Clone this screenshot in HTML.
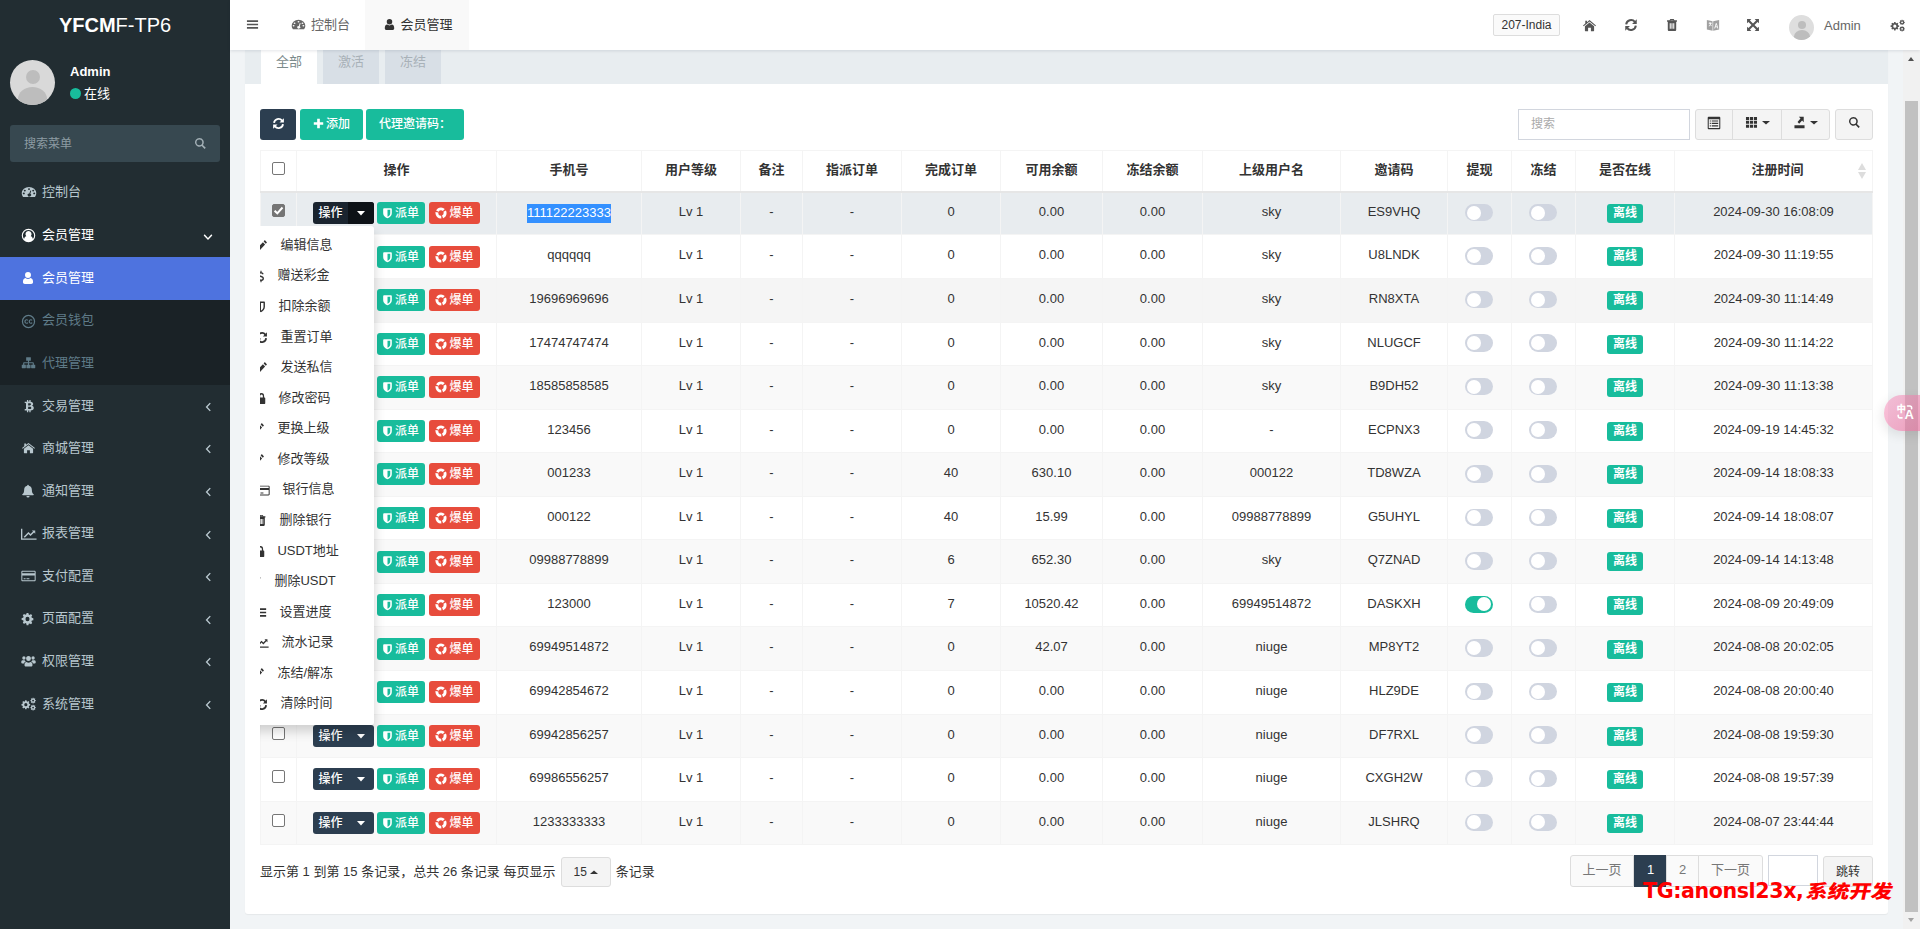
<!DOCTYPE html>
<html lang="zh-CN"><head><meta charset="utf-8"><title>YFCMF-TP6</title>
<style>
*{box-sizing:border-box;margin:0;padding:0}
html,body{width:1920px;height:929px;overflow:hidden}
body{font-family:"Liberation Sans","Noto Sans CJK SC",sans-serif;font-size:13px;line-height:18.5714px;color:#333;background:#f1f4f6;position:relative}
ul{list-style:none}
svg.ic{display:inline-block;vertical-align:middle}
/* sidebar */
.sidebar{position:absolute;left:0;top:0;width:230px;height:929px;background:#222d32;color:#b8c7ce}
.logo{height:50px;line-height:50px;text-align:center;color:#fff;font-size:20px;font-weight:400;letter-spacing:0}
.logo b{font-weight:700}
.user-panel{position:absolute;left:0;top:50px;width:230px;height:65px}
.avatar{position:absolute;left:10px;top:10px;width:45px;height:45px;border-radius:50%;background:#d9d9d9;overflow:hidden}
.avatar .hd{position:absolute;left:15.5px;top:10px;width:14px;height:14px;border-radius:50%;background:#bdbdbd}
.avatar .bd{position:absolute;left:8px;top:27px;width:29px;height:24px;border-radius:50%;background:#bdbdbd}
.user-panel .info{position:absolute;left:70px;top:11.7px;color:#fff}
.user-panel .info p{font-weight:700;font-size:13px;line-height:20px}
.user-panel .st{display:block;font-size:13px;line-height:20px;margin-top:2px}
.user-panel .dot{display:inline-block;width:11px;height:11px;border-radius:50%;background:#18bc9c;margin-right:3px;vertical-align:-1px}
.sb-search{position:absolute;left:10px;top:125px;width:210px;height:36.5px;background:#374850;border-radius:3px;color:#8d9ca3}
.sb-search .ph{position:absolute;left:14px;top:10px;font-size:12px}
.sb-search .sico{position:absolute;left:184px;top:12px;color:#a3b0b6}
.menu{position:absolute;left:0;top:171px;width:230px}
.menu>li{position:relative;height:42.57px;padding:12px 5px 12px 15px;font-size:13px;white-space:nowrap}
.menu li .mi{position:absolute;left:21px;top:50%;margin-top:-7px}
.menu li>span{position:absolute;left:42px;top:12px}
.menu li .arr{position:absolute;right:18.5px;top:50%;margin-top:-5px}
.menu>li.open{color:#fff}
.menu>li.open .arr{right:16px;margin-top:-1.5px}
.sub{background:#1a2226;margin-top:.8px}
.sub li{position:relative;height:42.57px;color:#5f7b88}
.sub li.active{background:#4e73df;color:#fff;box-shadow:0 1px 0 #4e73df}
/* topnav */
.topnav{position:absolute;left:230px;top:0;width:1690px;height:50px;background:#fff;box-shadow:0 1px 3px rgba(0,21,41,.11);z-index:20}
.topnav .toggle{position:absolute;left:16px;top:15px;color:#555}
.ntab{position:absolute;top:0;height:50px;line-height:49px;font-size:13px;color:#666}
.ntab svg{margin-right:5px;margin-top:-3px}
.ntab.t1{left:61px}
.ntab.t2{left:135px;width:104px;padding-left:17.5px;background:#f9f9f9;color:#333}
.site{position:absolute;left:1263px;top:14px;width:67px;height:22px;border:1px solid #ddd;border-radius:2px;background:#fafafa;font-size:12px;line-height:20px;text-align:center;color:#333}
.ti{position:absolute;top:16.6px;color:#555;line-height:16px}
.uav{position:absolute;left:1559px;top:15px;width:25px;height:25px;border-radius:50%;background:#dedede;overflow:hidden}
.uav .hd{position:absolute;left:8.5px;top:5.5px;width:8px;height:8px;border-radius:50%;background:#bdbdbd}
.uav .bd{position:absolute;left:4.5px;top:15px;width:16px;height:13px;border-radius:50%;background:#bdbdbd}
.uname{position:absolute;left:1594px;top:17px;font-size:13px;color:#666}
/* content */
.content{position:absolute;left:230px;top:50px;width:1673px;height:879px;background:#f1f4f6;overflow:hidden}
.panel{position:absolute;left:15px;top:0;width:1643px;height:864px;background:#fff;border-radius:0 0 3px 3px;box-shadow:0 1px 1px rgba(0,0,0,.05)}
.phead{position:absolute;left:0;top:0;width:1643px;height:34px;background:#e8edf0}
.pt{position:absolute;top:0;width:56px;height:34px;line-height:24px;text-align:center;background:#d8dfe6;color:#a8b1b8;font-size:13px}
.pt.a{background:#fff;color:#7b8a8b}
.toolbar{position:absolute;left:0;top:59px;width:1643px;height:31px}
.btn{position:absolute;top:0;height:31px;border-radius:3px;color:#fff;text-align:center;line-height:30px;font-size:12px}
.btn b{font-weight:500}
.btn.navy{background:#2c3e50}
.btn.teal{background:#18bc9c}
.btn svg{margin-top:-2px;margin-right:2px}
.btn.navy svg{margin-right:0}
.sinput{position:absolute;left:1273px;top:0;width:172px;height:31px;border:1px solid #d2d6de;background:#fff;font-size:12px;color:#aaa;line-height:29px;padding-left:12px}
.bgrp{position:absolute;left:1450px;top:0;width:135px;height:31px;border:1px solid #ddd;border-radius:3px;background:#f4f4f4;color:#333}
.bgrp>span{position:absolute;top:0;height:29px;line-height:24px;text-align:center}
.bgrp .g1{left:0;width:37px;border-right:1px solid #ddd}
.bgrp .g2{left:37px;width:49px;border-right:1px solid #ddd}
.bgrp .g3{left:86px;width:47px}
.bgrp .cd{margin-left:4px}
.sbtn{position:absolute;left:1590px;top:0;width:38px;height:31px;border:1px solid #ddd;border-radius:3px;background:#f4f4f4;text-align:center;line-height:24px;color:#333}
/* table */
.twrap{position:absolute;left:15px;top:100px;width:1614px;height:700px;overflow:hidden}
.tb{border-collapse:collapse;table-layout:fixed;width:1612px;border:1px solid #f4f4f4}
.tb th,.tb td{border:1px solid #f4f4f4;text-align:center;vertical-align:middle;white-space:nowrap;overflow:hidden}
.tb th.sortable{padding-left:8px}
.tb th{padding-bottom:2px;height:41.83px;font-weight:700;font-size:13px;color:#333;border-bottom:2px solid #e6e6e6;position:relative}
.tb td{height:43.5714px;padding:0 0 2px;font-size:13px}
.tb tr.odd td{background:#f9f9f9}
.tb tr.sel td{background:#e8ecef;height:42.5714px;padding-bottom:3px}
.tb tr.hov td{background:#f5f5f5}
.cb{display:inline-block;width:13px;height:13px;border:1px solid #767676;border-radius:2px;background:#fff;vertical-align:middle;position:relative;top:-2px}
.tb th .cb{top:-2px}
.cb.chk{background:#757575;border-color:#757575}
.cb svg{position:absolute;left:-1px;top:-1px}
.ops{font-size:0}
.bg{top:1px;display:inline-block;width:61px;height:22px;border-radius:3px;background:#2c3e50;color:#fff;font-size:12px;line-height:22px;vertical-align:middle;position:relative;text-align:left;margin-right:3px;font-weight:500}
.bg .b1{position:absolute;left:0;top:0;width:35px;height:22px;line-height:23px;text-align:center;padding-left:0}
.bg .b2{position:absolute;left:35px;top:0;width:26px;padding-right:1px;height:22px;text-align:center;border-radius:0 3px 3px 0}
.bg .b2 svg{margin-top:-1px}
.bg.open{background:#1a242f}
.bg.open .b2{background:#0d1217}
.bx{position:relative;top:1px;display:inline-block;height:22px;border-radius:3px;color:#fff;font-size:12px;line-height:22px;font-weight:500;vertical-align:middle;text-align:center}
.bx svg{margin-top:-2px;margin-right:0}
.bx .shd{width:11px;margin-left:-1px;margin-right:2px}
.bx .rcy{margin-left:-1px;margin-right:1px}
.bx.gr{width:48px;background:#18bc9c;margin-right:4px}
.bx.rd{width:51px;background:#e74c3c}
.hl{background:#3390ff;color:#fff;display:inline-block;line-height:19px;position:relative;top:1px}
.hl span{position:relative;top:-1px}
.sw{left:-1px;top:0;display:inline-block;width:28px;height:17.5px;border-radius:9px;background:#d0d5e0;position:relative;vertical-align:middle}
.sw i{position:absolute;left:2px;top:1.75px;width:14px;height:14px;border-radius:50%;background:#fff}
.sw.on{background:#18bc9c}
.sw.on i{left:12px}
.lb{position:relative;top:1.25px;display:inline-block;width:36px;height:19px;border-radius:3px;background:#18bc9c;color:#fff;font-weight:700;font-size:12px;line-height:19px;vertical-align:middle}
.sort{position:absolute;right:5px;top:12px;width:9px;height:16px}
.sort i{position:absolute;left:0;width:0;height:0;border-left:4px solid transparent;border-right:4px solid transparent}
.sort .u{top:0;border-bottom:7px solid #ddd}
.sort .d{top:9px;border-top:7px solid #ddd}
/* dropdown */
.ddclip{position:absolute;left:0;top:76px;width:130px;height:520px;overflow:hidden;pointer-events:none}
.dd{position:absolute;left:-46px;top:0;width:160px;height:499px;background:#fff;border-radius:3px;box-shadow:0 6px 12px rgba(0,0,0,.175)}
.dd li{position:absolute;left:46px;height:30px;width:114px;line-height:26px;color:#333;font-size:13px}
.dd .di{position:absolute;top:0;color:#333}
.dd .dtx{position:absolute;top:0;white-space:nowrap}
/* footer */
.pfoot{position:absolute;left:15px;top:805px;width:1613px;height:34px}
.pinfo{position:absolute;left:0;top:.5px;line-height:32px;font-size:13px;color:#333;white-space:nowrap}
.psz{display:inline-block;width:50.5px;margin-left:1.5px !important;height:30px;border:1px solid #ddd;border-radius:3px;background:#f4f4f4;line-height:28px;text-align:center;font-size:12px;vertical-align:middle;margin:0 1px 0 0}
.psz .cu{margin-left:3px;margin-top:-1px}
.pg{position:absolute;left:1310px;top:.3px;height:32px;font-size:13px;color:#777}
.pg li{position:absolute;top:0;height:32px;line-height:28.6px;text-align:center;border:1px solid #ddd;background:#fafafa;color:#777}
.pg .p1{left:0;width:64px;border-radius:3px 0 0 3px}
.pg .p2{left:64px;width:33px}
.pg .p2.on{background:#2c3e50;border-color:#2c3e50;color:#fff}
.pg .p3{left:96px;width:33px}
.pg .p4{left:128px;width:65px;border-radius:0 3px 3px 0}
.jin{position:absolute;left:1508px;top:0;width:50px;height:31px;border:1px solid #d2d6de;background:#fff}
.jbtn{position:absolute;left:1563px;top:1px;width:50px;height:31px;border:1px solid #ddd;border-radius:3px;background:#f4f4f4;text-align:center;line-height:30.5px;font-size:12px;color:#333}
.wm{position:absolute;left:0;top:0;color:#fe0000;white-space:nowrap;font-weight:700}
.wm .l{position:absolute;left:1398px;top:828.6px;font-family:"DejaVu Sans","Liberation Sans",sans-serif;font-size:20.6px;line-height:24px;font-weight:700;letter-spacing:-.4px}
.wm .c{position:absolute;left:1558.5px;top:830px;font-size:18.4px;line-height:24px;font-weight:900;transform:scaleX(1.175) skewX(-10deg);transform-origin:0 100%}
/* scroll + translate */
.scroll{position:absolute;left:1903px;top:50px;width:17px;height:879px;background:#f1f1f1}
.scroll .thumb{position:absolute;left:2px;top:51px;width:13px;height:811px;background:#c1c1c1}
.scroll .au{position:absolute;left:4.9px;top:7px;border-left:3.7px solid transparent;border-right:3.7px solid transparent;border-bottom:4px solid #505050}
.scroll .ad{position:absolute;left:4.9px;bottom:7px;border-left:3.7px solid transparent;border-right:3.7px solid transparent;border-top:4px solid #a3a3a3}
.trans{position:absolute;left:1884px;top:395px;width:46px;height:36px;border-radius:18px 0 0 18px;background:linear-gradient(135deg,rgba(243,140,185,.5),rgba(232,100,150,.62));box-shadow:-2px 4px 12px rgba(0,0,0,.09);z-index:30;color:#fff}
.trans .zh{position:absolute;left:12.5px;top:7.5px;font-size:9.5px;line-height:12px;font-weight:900}
.trans .en{position:absolute;left:20.5px;top:13px;font-size:13px;line-height:14px;font-weight:700}
.trans svg{position:absolute;left:12px;top:8px}

</style></head>
<body>
<aside class="sidebar">
<div class="logo"><b>YFCM</b>F-TP6</div>
<div class="user-panel"><div class="avatar"><span class="hd"></span><span class="bd"></span></div><div class="info"><p>Admin</p><span class="st"><i class="dot"></i>在线</span></div></div>
<div class="sb-search"><span class="ph">搜索菜单</span><svg class="ic sico" width="13" height="13" viewBox="0 0 16 16" preserveAspectRatio="none" fill="currentColor" style=""><path fill-rule="evenodd" d="M6.600 1.200a5.400 5.400 0 0 1 4.400 8.500l3.500 3.500-1.500 1.500-3.500-3.500A5.400 5.400 0 1 1 6.600 1.200zm0 1.800a3.600 3.600 0 1 0 0 7.200 3.600 3.600 0 0 0 0-7.200z"/></svg></div>
<ul class="menu">
<li><svg class="ic mi" width="16" height="14" viewBox="0 0 16 16" preserveAspectRatio="none" fill="currentColor" style=""><path d="M8 2.2A7.3 7.3 0 0 0 .7 9.5c0 1.5.4 2.8 1.2 4 .1.2.3.3.5.3h11.2c.2 0 .4-.1.5-.3.8-1.200 1.200-2.500 1.200-4A7.300 7.300 0 0 0 8 2.2zM8 3.600a1 1 0 1 1 0 2 1 1 0 0 1 0-2zM3.800 5.400a1 1 0 1 1 0 2 1 1 0 0 1 0-2zM2.800 8.600a1 1 0 1 1 0 2 1 1 0 0 1 0-2zm10.400 0a1 1 0 1 1 0 2 1 1 0 0 1 0-2zM12.200 5.400a1 1 0 1 1 0 2 1 1 0 0 1 0-2zM9.400 6.300l.9.300-1 3.400a1.700 1.700 0 1 1-1-.300z"/></svg><span>控制台</span></li>
<li class="open"><svg class="ic mi" width="15" height="15" viewBox="0 0 16 16" preserveAspectRatio="none" fill="currentColor" style=""><path fill-rule="evenodd" d="M8 .8a7.200 7.200 0 1 0 0 14.400A7.200 7.200 0 0 0 8 .8zm0 1.300a5.900 5.900 0 0 1 4.700 9.500c-.3-1.500-1-2.600-2.300-2.900A3.300 3.300 0 0 0 8 3.200a3.300 3.300 0 0 0-2.400 5.500c-1.300.3-2 1.400-2.300 2.900A5.900 5.900 0 0 1 8 2.100z"/></svg><span>会员管理</span><svg class="ic arr" width="12" height="8" viewBox="0 0 14 8" preserveAspectRatio="none" fill="currentColor" style=""><path d="M2.500 1.800L7 6l4.500-4.200" fill="none" stroke="currentColor" stroke-width="1.600"/></svg></li>
<ul class="sub">
<li class="active"><svg class="ic mi" width="14" height="14" viewBox="0 0 16 16" preserveAspectRatio="none" fill="currentColor" style=""><path d="M8 1.200a3.400 3.400 0 1 1 0 6.800 3.400 3.400 0 0 1 0-6.800zM5.200 8.100c.8.600 1.700 1 2.800 1s2-.400 2.800-1c2 .200 3 2 3 4.400 0 1.400-.9 2.300-2.200 2.300H4.400c-1.300 0-2.200-.9-2.200-2.300 0-2.400 1-4.200 3-4.400z"/></svg><span>会员管理</span></li>
<li><svg class="ic mi" width="15" height="15" viewBox="0 0 16 16" preserveAspectRatio="none" fill="currentColor" style=""><path fill-rule="evenodd" d="M8 .9a7.100 7.100 0 1 0 0 14.200A7.100 7.100 0 0 0 8 .9zm0 1.300a5.800 5.800 0 1 1 0 11.600A5.800 5.800 0 0 1 8 2.200zM5.900 5.600c-1.400 0-2.300 1-2.300 2.400s.9 2.400 2.300 2.400c.8 0 1.400-.3 1.800-.9l-.8-.6c-.2.300-.5.500-.9.500-.7 0-1.100-.6-1.100-1.400s.4-1.400 1.100-1.400c.4 0 .7.200.9.500l.8-.6c-.4-.6-1-.9-1.800-.9zm4.600 0c-1.400 0-2.300 1-2.300 2.400s.9 2.400 2.300 2.400c.8 0 1.400-.3 1.800-.9l-.8-.6c-.2.300-.5.500-.9.500-.7 0-1.100-.6-1.100-1.400s.4-1.400 1.100-1.400c.4 0 .7.200.9.500l.8-.6c-.4-.6-1-.9-1.800-.9z"/></svg><span>会员钱包</span></li>
<li><svg class="ic mi" width="15" height="14" viewBox="0 0 16 16" preserveAspectRatio="none" fill="currentColor" style=""><path d="M6 1.500h4c.3 0 .5.200.5.500v3c0 .3-.2.500-.5.500H8.600v1.700h4.200c.5 0 .9.400.9.900v1.900h1c.3 0 .5.200.5.500v3c0 .3-.2.500-.5.500h-3.400c-.3 0-.5-.2-.5-.5v-3c0-.3.200-.5.500-.5h1.200V8.400H8.600V10h1.100c.3 0 .5.200.5.500v3c0 .3-.2.500-.5.500H6.300c-.3 0-.5-.2-.5-.5v-3c0-.3.200-.5.500-.5h1.100V8.400H3.500V10h1.200c.3 0 .5.200.5.500v3c0 .3-.2.500-.5.500H1.300c-.3 0-.5-.2-.5-.5v-3c0-.3.200-.5.500-.5h1V8.100c0-.5.400-.9.900-.9h4.200V5.500H6c-.3 0-.5-.2-.5-.5V2c0-.3.200-.5.500-.5z"/></svg><span>代理管理</span></li>
</ul>
<li><svg class="ic mi" width="12" height="14" viewBox="0 0 14 16" preserveAspectRatio="none" fill="currentColor" style="margin-left:1.5px"><path fill-rule="evenodd" d="M4.600 1h1.500v1.900h1.300V1h1.500v2c1.900.2 3 1.100 3 2.600 0 1-.5 1.700-1.400 2.100 1.300.3 2.100 1.200 2.100 2.500 0 1.800-1.300 2.800-3.700 2.900V15H7.400v-1.900H6.100V15H4.600v-1.900H2v-1.600h.9c.4 0 .6-.2.600-.6V5.200c0-.4-.2-.6-.6-.6H2V3h2.600zm1.400 3.800v2.500h1.700c1 0 1.600-.5 1.600-1.300s-.6-1.200-1.600-1.200zm0 4.100v2.600h2c1.100 0 1.700-.5 1.700-1.300s-.6-1.300-1.700-1.300z"/></svg><span>交易管理</span><svg class="ic arr" width="7" height="12" viewBox="0 0 8 14" preserveAspectRatio="none" fill="currentColor" style=""><path d="M6 2.500L1.800 7 6 11.500" fill="none" stroke="currentColor" stroke-width="1.600"/></svg></li>
<li><svg class="ic mi" width="15" height="14" viewBox="0 0 16 16" preserveAspectRatio="none" fill="currentColor" style=""><path d="M8 2.200l6.900 5.700-.7.900L8 3.700 1.800 8.800l-.7-.9 2.400-2V2.800h1.800v1.600zM8 4.900l4.900 4v4.600c0 .3-.2.500-.5.500H9.500v-3.500h-3V14H3.600c-.3 0-.5-.2-.5-.5V8.900z"/></svg><span>商城管理</span><svg class="ic arr" width="7" height="12" viewBox="0 0 8 14" preserveAspectRatio="none" fill="currentColor" style=""><path d="M6 2.500L1.800 7 6 11.500" fill="none" stroke="currentColor" stroke-width="1.600"/></svg></li>
<li><svg class="ic mi" width="14" height="14" viewBox="0 0 16 16" preserveAspectRatio="none" fill="currentColor" style=""><path d="M8 .8c.5 0 .9.400.9.900v.3c2.100.4 3.500 2.200 3.500 4.500 0 3.300 1 4.400 2.300 5.500 0 .5-.4.900-.9.900H2.200c-.5 0-.9-.4-.9-.9 1.300-1.100 2.300-2.200 2.300-5.500 0-2.300 1.400-4.100 3.500-4.500v-.3c0-.5.400-.9.900-.9zM6.200 13.700h3.600a1.800 1.800 0 0 1-3.600 0z"/></svg><span>通知管理</span><svg class="ic arr" width="7" height="12" viewBox="0 0 8 14" preserveAspectRatio="none" fill="currentColor" style=""><path d="M6 2.500L1.800 7 6 11.500" fill="none" stroke="currentColor" stroke-width="1.600"/></svg></li>
<li><svg class="ic mi" width="16" height="14" viewBox="0 0 18 16" preserveAspectRatio="none" fill="currentColor" style=""><path d="M1.500 2v11h16v1.500H0V2zM16 3.500v4.200L14.700 6.400l-4 4-2.300-2.300L4.300 12.200 3.100 11l5.300-5.300 2.300 2.300 2.800-2.800L12.200 3.900H16z"/></svg><span>报表管理</span><svg class="ic arr" width="7" height="12" viewBox="0 0 8 14" preserveAspectRatio="none" fill="currentColor" style=""><path d="M6 2.500L1.800 7 6 11.500" fill="none" stroke="currentColor" stroke-width="1.600"/></svg></li>
<li><svg class="ic mi" width="15" height="14" viewBox="0 0 18 16" preserveAspectRatio="none" fill="currentColor" style=""><path fill-rule="evenodd" d="M1.800 2h14.400c.8 0 1.400.6 1.400 1.400v9.200c0 .8-.6 1.400-1.400 1.400H1.800c-.8 0-1.400-.6-1.400-1.400V3.400C.4 2.600 1 2 1.800 2zm0 1.200a.2.200 0 0 0-.2.200v1.500h14.800V3.400a.2.200 0 0 0-.2-.2zM1.600 7.500v5.100c0 .1.100.2.200.2h14.400c.1 0 .2-.1.200-.2V7.500zm1.600 3.100h2.300v1.200H3.200zm3.400 0h3.500v1.200H6.600z"/></svg><span>支付配置</span><svg class="ic arr" width="7" height="12" viewBox="0 0 8 14" preserveAspectRatio="none" fill="currentColor" style=""><path d="M6 2.500L1.800 7 6 11.500" fill="none" stroke="currentColor" stroke-width="1.600"/></svg></li>
<li><svg class="ic mi" width="13" height="14" viewBox="0 0 16 16" preserveAspectRatio="none" fill="currentColor" style=""><path fill-rule="evenodd" d="M6.900 1h2.200l.4 1.900c.4.100.8.300 1.200.5l1.600-1 1.500 1.500-1 1.600c.2.400.4.800.5 1.200l1.900.4v2.200l-1.900.4c-.1.400-.3.800-.5 1.200l1 1.600-1.500 1.500-1.600-1c-.4.200-.8.400-1.200.5L9.100 15H6.900l-.4-1.900c-.4-.1-.8-.3-1.200-.5l-1.600 1-1.500-1.500 1-1.600c-.2-.4-.4-.8-.5-1.200L.8 9.100V6.900l1.900-.4c.1-.4.300-.8.5-1.200l-1-1.600 1.500-1.500 1.600 1c.4-.2.800-.4 1.200-.5zM8 5.500a2.500 2.500 0 1 0 0 5 2.500 2.500 0 0 0 0-5z"/></svg><span>页面配置</span><svg class="ic arr" width="7" height="12" viewBox="0 0 8 14" preserveAspectRatio="none" fill="currentColor" style=""><path d="M6 2.500L1.800 7 6 11.500" fill="none" stroke="currentColor" stroke-width="1.600"/></svg></li>
<li><svg class="ic mi" width="15" height="14" viewBox="0 0 18 16" preserveAspectRatio="none" fill="currentColor" style=""><path d="M9 2.300a2.900 2.900 0 1 1 0 5.800 2.900 2.900 0 0 1 0-5.800zM3.500 2.600a2 2 0 1 1 0 4 2 2 0 0 1 0-4zm11 0a2 2 0 1 1 0 4 2 2 0 0 1 0-4zM1.800 7h2.600c.3.700.9 1.300 1.600 1.700-1.100.2-2 1-2.300 2.100H2c-1 0-1.700-.5-1.700-1.500C.3 8 .8 7 1.800 7zm14.400 0c1 0 1.500 1 1.500 2.300 0 1-.7 1.500-1.700 1.500h-1.700c-.3-1.100-1.200-1.900-2.300-2.100.7-.4 1.300-1 1.600-1.700zM6.700 9.200c.7.400 1.500.7 2.300.7s1.600-.3 2.300-.7c1.700.1 2.500 1.500 2.500 3.300 0 1.100-.7 1.800-1.800 1.800H6c-1.100 0-1.800-.7-1.800-1.800 0-1.800.8-3.200 2.500-3.300z"/></svg><span>权限管理</span><svg class="ic arr" width="7" height="12" viewBox="0 0 8 14" preserveAspectRatio="none" fill="currentColor" style=""><path d="M6 2.500L1.800 7 6 11.500" fill="none" stroke="currentColor" stroke-width="1.600"/></svg></li>
<li><svg class="ic mi" width="15" height="14" viewBox="0 0 18 16" preserveAspectRatio="none" fill="currentColor" style=""><path fill-rule="evenodd" d="M5 3.600h1.600l.3 1.300c.3.100.6.200.9.400l1.100-.7 1.100 1.100-.7 1.100c.2.300.3.600.4.900l1.300.3v1.600l-1.300.3c-.1.300-.2.600-.4.900l.7 1.100-1.100 1.100-1.100-.7c-.3.200-.6.300-.9.400l-.3 1.300H5l-.3-1.300c-.3-.1-.6-.2-.9-.4l-1.100.7-1.100-1.100.7-1.100c-.2-.3-.3-.6-.4-.9L.6 9.600V8l1.300-.3c.1-.3.200-.6.400-.9l-.7-1.100 1.100-1.100 1.100.7c.3-.2.600-.3.900-.4zm.8 3.300a1.900 1.900 0 1 0 0 3.800 1.900 1.900 0 0 0 0-3.800zM14 .8h1l.2.900.5.200.8-.5.700.7-.5.800.2.500.9.200v1l-.9.200-.2.500.5.800-.7.700-.8-.5-.5.200-.2.900h-1l-.2-.9-.5-.2-.8.500-.7-.7.500-.8-.2-.5-.9-.2v-1l.9-.2.2-.5-.5-.8.700-.7.800.5.500-.2zm.5 2.200a1.100 1.100 0 1 0 0 2.200 1.100 1.100 0 0 0 0-2.200zM14 8.800h1l.2.900.5.200.8-.5.700.7-.5.800.2.500.9.200v1l-.9.200-.2.500.5.800-.7.700-.8-.5-.5.200-.2.900h-1l-.2-.9-.5-.2-.8.500-.7-.7.500-.8-.2-.5-.9-.2v-1l.9-.2.2-.5-.5-.8.700-.7.800.5.500-.2zm.5 2.200a1.100 1.100 0 1 0 0 2.200 1.100 1.100 0 0 0 0-2.200z"/></svg><span>系统管理</span><svg class="ic arr" width="7" height="12" viewBox="0 0 8 14" preserveAspectRatio="none" fill="currentColor" style=""><path d="M6 2.500L1.800 7 6 11.500" fill="none" stroke="currentColor" stroke-width="1.600"/></svg></li>
</ul></aside>
<header class="topnav">
<a class="toggle"><svg class="ic " width="13" height="13" viewBox="0 0 14 14" preserveAspectRatio="none" fill="currentColor" style=""><path d="M1 2.500h12v1.800H1zm0 3.600h12v1.800H1zm0 3.600h12v1.800H1z"/></svg></a>
<div class="ntab t1"><svg class="ic " width="15" height="13" viewBox="0 0 16 16" preserveAspectRatio="none" fill="currentColor" style=""><path d="M8 2.2A7.3 7.3 0 0 0 .7 9.5c0 1.5.4 2.8 1.2 4 .1.2.3.3.5.3h11.2c.2 0 .4-.1.5-.3.8-1.200 1.200-2.500 1.200-4A7.300 7.300 0 0 0 8 2.2zM8 3.600a1 1 0 1 1 0 2 1 1 0 0 1 0-2zM3.800 5.400a1 1 0 1 1 0 2 1 1 0 0 1 0-2zM2.800 8.600a1 1 0 1 1 0 2 1 1 0 0 1 0-2zm10.400 0a1 1 0 1 1 0 2 1 1 0 0 1 0-2zM12.200 5.400a1 1 0 1 1 0 2 1 1 0 0 1 0-2zM9.400 6.300l.9.300-1 3.400a1.700 1.700 0 1 1-1-.300z"/></svg><span>控制台</span></div>
<div class="ntab t2 act"><svg class="ic " width="13" height="13" viewBox="0 0 16 16" preserveAspectRatio="none" fill="currentColor" style=""><path d="M8 1.200a3.400 3.400 0 1 1 0 6.800 3.400 3.400 0 0 1 0-6.800zM5.200 8.100c.8.600 1.700 1 2.800 1s2-.400 2.800-1c2 .200 3 2 3 4.400 0 1.400-.9 2.300-2.200 2.300H4.400c-1.300 0-2.200-.9-2.200-2.300 0-2.400 1-4.200 3-4.400z"/></svg><span>会员管理</span></div>
<div class="site">207-India</div>
<span class="ti" style="left:1352px"><svg class="ic " width="15" height="15" viewBox="0 0 16 16" preserveAspectRatio="none" fill="currentColor" style=""><path d="M8 2.200l6.900 5.700-.7.900L8 3.700 1.800 8.800l-.7-.9 2.400-2V2.800h1.800v1.600zM8 4.900l4.900 4v4.600c0 .3-.2.500-.5.500H9.500v-3.500h-3V14H3.600c-.3 0-.5-.2-.5-.5V8.900z"/></svg></span>
<span class="ti" style="left:1394px"><svg class="ic " width="14" height="14" viewBox="0 0 16 16" preserveAspectRatio="none" fill="currentColor" style=""><g fill="none" stroke="currentColor" stroke-width="2.300"><path d="M2.500 7.300A5.600 5.600 0 0 1 12.400 4.400"/><path d="M13.500 8.700A5.600 5.600 0 0 1 3.600 11.600"/></g><path d="M14.600 1.400v5.400H9.200z"/><path d="M1.400 14.600V9.200h5.400z"/></svg></span>
<span class="ti" style="left:1435px"><svg class="ic " width="14" height="14" viewBox="0 0 16 16" preserveAspectRatio="none" fill="currentColor" style=""><path fill-rule="evenodd" d="M6 1.200h4l.7 1.500h2.600c.2 0 .4.200.4.400v.8c0 .2-.2.400-.4.400h-.5v9c0 .8-.6 1.500-1.400 1.500H4.600c-.8 0-1.400-.7-1.400-1.500v-9h-.5c-.2 0-.4-.2-.4-.4v-.8c0-.2.200-.4.400-.4h2.600zm.5 1l-.3.500h3.600l-.3-.5zM5.400 6v6.200h1.200V6zm2 0v6.200h1.200V6zm2 0v6.200h1.200V6z"/></svg></span>
<span class="ti" style="left:1476px;opacity:.55"><svg class="ic " width="14" height="14" viewBox="0 0 16 16" preserveAspectRatio="none" fill="currentColor" style=""><path fill-rule="evenodd" d="M1 2.200l6.500 1.600v10.800L1 13zm7.200 1.500L15 2.300v10.900l-6.800 1.500zM3.200 5.500v1h1.500c-.2 1-.8 1.900-1.700 2.600l.5.600c.6-.5 1.100-1 1.400-1.700.3.500.7 1 1.200 1.300l.4-.7c-.5-.3-.9-.8-1.200-1.400.2-.5.300-.5.400-.7H6.500v-1H5v-.8H4.200v.8zm8 .5l-1.800 6h1l.4-1.400h1.900l.4 1.400h1l-1.800-6zm.5 1.200l.7 2.500h-1.400z"/></svg></span>
<span class="ti" style="left:1516px"><svg class="ic " width="14" height="14" viewBox="0 0 16 16" preserveAspectRatio="none" fill="currentColor" style=""><path d="M1.200 1.200h4.900L4.500 2.800 8 6.300l3.500-3.500-1.600-1.600h4.900v4.900l-1.600-1.600L9.700 8l3.500 3.500 1.600-1.600v4.900H9.900l1.600-1.600L8 9.700l-3.500 3.500 1.600 1.600H1.200V9.900l1.600 1.600L6.300 8 2.800 4.500 1.200 6.100z"/></svg></span>
<div class="uav"><span class="hd"></span><span class="bd"></span></div><span class="uname">Admin</span>
<span class="ti" style="left:1660px"><svg class="ic " width="15" height="13" viewBox="0 0 18 16" preserveAspectRatio="none" fill="currentColor" style=""><path fill-rule="evenodd" d="M5 3.600h1.600l.3 1.300c.3.100.6.200.9.400l1.100-.7 1.100 1.100-.7 1.100c.2.300.3.600.4.900l1.300.3v1.600l-1.300.3c-.1.300-.2.600-.4.900l.7 1.100-1.100 1.100-1.100-.7c-.3.200-.6.300-.9.400l-.3 1.300H5l-.3-1.300c-.3-.1-.6-.2-.9-.4l-1.100.7-1.100-1.100.7-1.100c-.2-.3-.3-.6-.4-.9L.6 9.600V8l1.300-.3c.1-.3.200-.6.400-.9l-.7-1.100 1.100-1.100 1.100.7c.3-.2.600-.3.900-.4zm.8 3.300a1.900 1.900 0 1 0 0 3.800 1.900 1.900 0 0 0 0-3.800zM14 .8h1l.2.900.5.200.8-.5.700.7-.5.800.2.500.9.200v1l-.9.200-.2.500.5.800-.7.700-.8-.5-.5.200-.2.900h-1l-.2-.9-.5-.2-.8.500-.7-.7.500-.8-.2-.5-.9-.2v-1l.9-.2.2-.5-.5-.8.700-.7.800.5.500-.2zm.5 2.200a1.100 1.100 0 1 0 0 2.200 1.100 1.100 0 0 0 0-2.200zM14 8.800h1l.2.900.5.200.8-.5.700.7-.5.800.2.500.9.200v1l-.9.200-.2.500.5.800-.7.700-.8-.5-.5.200-.2.900h-1l-.2-.9-.5-.2-.8.500-.7-.7.500-.8-.2-.5-.9-.2v-1l.9-.2.2-.5-.5-.8.700-.7.800.5.500-.2zm.5 2.200a1.100 1.100 0 1 0 0 2.200 1.100 1.100 0 0 0 0-2.200z"/></svg></span>
</header>
<div class="content">
<div class="panel">
<div class="phead"><span class="pt a" style="left:16px">全部</span><span class="pt" style="left:78px">激活</span><span class="pt" style="left:140px">冻结</span></div>
<div class="toolbar">
<span class="btn navy" style="left:15px;width:36px"><svg class="ic " width="13" height="13" viewBox="0 0 16 16" preserveAspectRatio="none" fill="currentColor" style=""><g fill="none" stroke="currentColor" stroke-width="2.300"><path d="M2.500 7.300A5.600 5.600 0 0 1 12.400 4.400"/><path d="M13.500 8.700A5.600 5.600 0 0 1 3.600 11.600"/></g><path d="M14.600 1.400v5.400H9.200z"/><path d="M1.400 14.600V9.200h5.400z"/></svg></span>
<span class="btn teal" style="left:55px;width:63px"><svg class="ic " width="11" height="11" viewBox="0 0 14 14" preserveAspectRatio="none" fill="currentColor" style=""><path d="M5.300 1h3.400v4.300H13v3.400H8.700V13H5.300V8.700H1V5.300h4.300z"/></svg><b>添加</b></span>
<span class="btn teal" style="left:121px;width:98px"><b>代理邀请码：</b></span>
<span class="sinput"><span>搜索</span></span>
<span class="bgrp"><span class="g1"><svg class="ic " width="14" height="16" viewBox="0 0 16 16" preserveAspectRatio="none" fill="currentColor" style=""><path fill-rule="evenodd" d="M1.800 1.800h12.400c.6 0 1 .4 1 1v10.400c0 .6-.4 1-1 1H1.800c-.6 0-1-.4-1-1V2.800c0-.6.400-1 1-1zm.2 2.400v8.800h12V4.200zM3.200 5.400h1.200v1.200H3.200zm2.200 0h7.400v1.200H5.400zM3.200 7.800h1.200V9H3.200zm2.200 0h7.400V9H5.400zm-2.200 2.400h1.200v1.200H3.200zm2.200 0h7.400v1.200H5.400z"/></svg></span><span class="g2"><svg class="ic " width="13" height="15" viewBox="0 0 16 16" preserveAspectRatio="none" fill="currentColor" style=""><path d="M1.200 2h3.900v3.200H1.200zm4.900 0H10v3.200H6.100zM11 2h3.800v3.200H11zM1.200 6.200h3.900v3.200H1.200zm4.900 0H10v3.200H6.100zm4.900 0h3.800v3.200H11zM1.200 10.400h3.900v3.200H1.200zm4.900 0H10v3.200H6.100zm4.900 0h3.800v3.200H11z"/></svg><svg class="ic cd" width="8" height="4" viewBox="0 0 8 5" preserveAspectRatio="none" fill="currentColor" style=""><path d="M0 0h8L4 4.500z"/></svg></span><span class="g3"><svg class="ic " width="13" height="15" viewBox="0 0 16 16" preserveAspectRatio="none" fill="currentColor" style=""><path d="M1.800 11h12.400v3.200H1.800zM7.200 1.800h6v6l-2-2-3.600 3.600-2-2L9.200 3.800z"/></svg><svg class="ic cd" width="8" height="4" viewBox="0 0 8 5" preserveAspectRatio="none" fill="currentColor" style=""><path d="M0 0h8L4 4.500z"/></svg></span></span>
<span class="sbtn"><svg class="ic " width="13" height="13" viewBox="0 0 16 16" preserveAspectRatio="none" fill="currentColor" style=""><path fill-rule="evenodd" d="M6.600 1.200a5.400 5.400 0 0 1 4.400 8.500l3.500 3.500-1.500 1.500-3.500-3.500A5.400 5.400 0 1 1 6.600 1.200zm0 1.800a3.600 3.600 0 1 0 0 7.200 3.600 3.600 0 0 0 0-7.200z"/></svg></span>
</div>
<div class="twrap">
<table class="tb"><colgroup>
<col style="width:36px">
<col style="width:200px">
<col style="width:145px">
<col style="width:99px">
<col style="width:62px">
<col style="width:99px">
<col style="width:99px">
<col style="width:102px">
<col style="width:100px">
<col style="width:138px">
<col style="width:107px">
<col style="width:64px">
<col style="width:64px">
<col style="width:99px">
<col style="width:198px">
</colgroup><thead><tr><th><span class="cb"></span></th>
<th>操作</th>
<th>手机号</th>
<th>用户等级</th>
<th>备注</th>
<th>指派订单</th>
<th>完成订单</th>
<th>可用余额</th>
<th>冻结余额</th>
<th>上级用户名</th>
<th>邀请码</th>
<th>提现</th>
<th>冻结</th>
<th>是否在线</th>
<th class="sortable">注册时间<span class="sort"><i class="u"></i><i class="d"></i></span></th>
</tr></thead><tbody>
<tr class="sel">
<td><span class="cb chk"><svg width="13" height="13" viewBox="0 0 13 13"><path d="M2.600 6.700l2.700 2.600 5.200-5.800" fill="none" stroke="#fff" stroke-width="2"/></svg></span></td>
<td class="ops"><span class="bg open"><span class="b1">操作</span><span class="b2"><svg class="ic " width="8" height="5" viewBox="0 0 8 5" preserveAspectRatio="none" fill="currentColor" style=""><path d="M0 0h8L4 4.500z"/></svg></span></span><span class="bx gr"><svg class="ic shd" width="12" height="12" viewBox="0 0 14 14" preserveAspectRatio="none" fill="currentColor" style=""><path fill-rule="evenodd" d="M2.500 1.500h9c.6 0 1 .4 1 1v4.700c0 2.800-2.400 4.700-5.500 6C3.900 11.900 1.500 10 1.500 7.200V2.500c0-.6.400-1 1-1zM7 3.200v8.200c1.900-.9 3.500-2.200 3.500-4.200V3.200z"/></svg>派单</span><span class="bx rd"><svg class="ic rcy" width="14" height="14" viewBox="0 0 16 16" preserveAspectRatio="none" fill="currentColor" style=""><circle cx="8" cy="8" r="4.700" fill="none" stroke="currentColor" stroke-width="3.300" stroke-dasharray="8.350 1.500" stroke-dashoffset="3"/></svg>爆单</span></td>
<td><span class="hl"><span>111122223333</span></span></td>
<td>Lv 1</td>
<td>-</td>
<td>-</td>
<td>0</td>
<td>0.00</td>
<td>0.00</td>
<td>sky</td>
<td>ES9VHQ</td>
<td><span class="sw "><i></i></span></td>
<td><span class="sw "><i></i></span></td>
<td><span class="lb">离线</span></td>
<td class="dt">2024-09-30 16:08:09</td>
</tr>
<tr class="">
<td><span class="cb "></span></td>
<td class="ops"><span class="bg "><span class="b1">操作</span><span class="b2"><svg class="ic " width="8" height="5" viewBox="0 0 8 5" preserveAspectRatio="none" fill="currentColor" style=""><path d="M0 0h8L4 4.500z"/></svg></span></span><span class="bx gr"><svg class="ic shd" width="12" height="12" viewBox="0 0 14 14" preserveAspectRatio="none" fill="currentColor" style=""><path fill-rule="evenodd" d="M2.500 1.500h9c.6 0 1 .4 1 1v4.700c0 2.800-2.400 4.700-5.500 6C3.900 11.900 1.500 10 1.500 7.200V2.500c0-.6.400-1 1-1zM7 3.200v8.200c1.900-.9 3.500-2.200 3.500-4.200V3.200z"/></svg>派单</span><span class="bx rd"><svg class="ic rcy" width="14" height="14" viewBox="0 0 16 16" preserveAspectRatio="none" fill="currentColor" style=""><circle cx="8" cy="8" r="4.700" fill="none" stroke="currentColor" stroke-width="3.300" stroke-dasharray="8.350 1.500" stroke-dashoffset="3"/></svg>爆单</span></td>
<td>qqqqqq</td>
<td>Lv 1</td>
<td>-</td>
<td>-</td>
<td>0</td>
<td>0.00</td>
<td>0.00</td>
<td>sky</td>
<td>U8LNDK</td>
<td><span class="sw "><i></i></span></td>
<td><span class="sw "><i></i></span></td>
<td><span class="lb">离线</span></td>
<td class="dt">2024-09-30 11:19:55</td>
</tr>
<tr class="hov">
<td><span class="cb "></span></td>
<td class="ops"><span class="bg "><span class="b1">操作</span><span class="b2"><svg class="ic " width="8" height="5" viewBox="0 0 8 5" preserveAspectRatio="none" fill="currentColor" style=""><path d="M0 0h8L4 4.500z"/></svg></span></span><span class="bx gr"><svg class="ic shd" width="12" height="12" viewBox="0 0 14 14" preserveAspectRatio="none" fill="currentColor" style=""><path fill-rule="evenodd" d="M2.500 1.500h9c.6 0 1 .4 1 1v4.700c0 2.800-2.400 4.700-5.500 6C3.900 11.900 1.500 10 1.500 7.200V2.500c0-.6.400-1 1-1zM7 3.200v8.200c1.900-.9 3.500-2.200 3.500-4.200V3.200z"/></svg>派单</span><span class="bx rd"><svg class="ic rcy" width="14" height="14" viewBox="0 0 16 16" preserveAspectRatio="none" fill="currentColor" style=""><circle cx="8" cy="8" r="4.700" fill="none" stroke="currentColor" stroke-width="3.300" stroke-dasharray="8.350 1.500" stroke-dashoffset="3"/></svg>爆单</span></td>
<td>19696969696</td>
<td>Lv 1</td>
<td>-</td>
<td>-</td>
<td>0</td>
<td>0.00</td>
<td>0.00</td>
<td>sky</td>
<td>RN8XTA</td>
<td><span class="sw "><i></i></span></td>
<td><span class="sw "><i></i></span></td>
<td><span class="lb">离线</span></td>
<td class="dt">2024-09-30 11:14:49</td>
</tr>
<tr class="">
<td><span class="cb "></span></td>
<td class="ops"><span class="bg "><span class="b1">操作</span><span class="b2"><svg class="ic " width="8" height="5" viewBox="0 0 8 5" preserveAspectRatio="none" fill="currentColor" style=""><path d="M0 0h8L4 4.500z"/></svg></span></span><span class="bx gr"><svg class="ic shd" width="12" height="12" viewBox="0 0 14 14" preserveAspectRatio="none" fill="currentColor" style=""><path fill-rule="evenodd" d="M2.500 1.500h9c.6 0 1 .4 1 1v4.700c0 2.800-2.400 4.700-5.500 6C3.900 11.900 1.500 10 1.500 7.200V2.500c0-.6.400-1 1-1zM7 3.200v8.200c1.900-.9 3.500-2.200 3.500-4.200V3.200z"/></svg>派单</span><span class="bx rd"><svg class="ic rcy" width="14" height="14" viewBox="0 0 16 16" preserveAspectRatio="none" fill="currentColor" style=""><circle cx="8" cy="8" r="4.700" fill="none" stroke="currentColor" stroke-width="3.300" stroke-dasharray="8.350 1.500" stroke-dashoffset="3"/></svg>爆单</span></td>
<td>17474747474</td>
<td>Lv 1</td>
<td>-</td>
<td>-</td>
<td>0</td>
<td>0.00</td>
<td>0.00</td>
<td>sky</td>
<td>NLUGCF</td>
<td><span class="sw "><i></i></span></td>
<td><span class="sw "><i></i></span></td>
<td><span class="lb">离线</span></td>
<td class="dt">2024-09-30 11:14:22</td>
</tr>
<tr class="odd">
<td><span class="cb "></span></td>
<td class="ops"><span class="bg "><span class="b1">操作</span><span class="b2"><svg class="ic " width="8" height="5" viewBox="0 0 8 5" preserveAspectRatio="none" fill="currentColor" style=""><path d="M0 0h8L4 4.500z"/></svg></span></span><span class="bx gr"><svg class="ic shd" width="12" height="12" viewBox="0 0 14 14" preserveAspectRatio="none" fill="currentColor" style=""><path fill-rule="evenodd" d="M2.500 1.500h9c.6 0 1 .4 1 1v4.700c0 2.800-2.400 4.700-5.500 6C3.900 11.900 1.500 10 1.500 7.200V2.500c0-.6.400-1 1-1zM7 3.200v8.200c1.900-.9 3.500-2.200 3.500-4.200V3.200z"/></svg>派单</span><span class="bx rd"><svg class="ic rcy" width="14" height="14" viewBox="0 0 16 16" preserveAspectRatio="none" fill="currentColor" style=""><circle cx="8" cy="8" r="4.700" fill="none" stroke="currentColor" stroke-width="3.300" stroke-dasharray="8.350 1.500" stroke-dashoffset="3"/></svg>爆单</span></td>
<td>18585858585</td>
<td>Lv 1</td>
<td>-</td>
<td>-</td>
<td>0</td>
<td>0.00</td>
<td>0.00</td>
<td>sky</td>
<td>B9DH52</td>
<td><span class="sw "><i></i></span></td>
<td><span class="sw "><i></i></span></td>
<td><span class="lb">离线</span></td>
<td class="dt">2024-09-30 11:13:38</td>
</tr>
<tr class="">
<td><span class="cb "></span></td>
<td class="ops"><span class="bg "><span class="b1">操作</span><span class="b2"><svg class="ic " width="8" height="5" viewBox="0 0 8 5" preserveAspectRatio="none" fill="currentColor" style=""><path d="M0 0h8L4 4.500z"/></svg></span></span><span class="bx gr"><svg class="ic shd" width="12" height="12" viewBox="0 0 14 14" preserveAspectRatio="none" fill="currentColor" style=""><path fill-rule="evenodd" d="M2.500 1.500h9c.6 0 1 .4 1 1v4.700c0 2.800-2.400 4.700-5.500 6C3.900 11.900 1.500 10 1.500 7.200V2.500c0-.6.400-1 1-1zM7 3.200v8.200c1.900-.9 3.500-2.200 3.500-4.200V3.200z"/></svg>派单</span><span class="bx rd"><svg class="ic rcy" width="14" height="14" viewBox="0 0 16 16" preserveAspectRatio="none" fill="currentColor" style=""><circle cx="8" cy="8" r="4.700" fill="none" stroke="currentColor" stroke-width="3.300" stroke-dasharray="8.350 1.500" stroke-dashoffset="3"/></svg>爆单</span></td>
<td>123456</td>
<td>Lv 1</td>
<td>-</td>
<td>-</td>
<td>0</td>
<td>0.00</td>
<td>0.00</td>
<td>-</td>
<td>ECPNX3</td>
<td><span class="sw "><i></i></span></td>
<td><span class="sw "><i></i></span></td>
<td><span class="lb">离线</span></td>
<td class="dt">2024-09-19 14:45:32</td>
</tr>
<tr class="odd">
<td><span class="cb "></span></td>
<td class="ops"><span class="bg "><span class="b1">操作</span><span class="b2"><svg class="ic " width="8" height="5" viewBox="0 0 8 5" preserveAspectRatio="none" fill="currentColor" style=""><path d="M0 0h8L4 4.500z"/></svg></span></span><span class="bx gr"><svg class="ic shd" width="12" height="12" viewBox="0 0 14 14" preserveAspectRatio="none" fill="currentColor" style=""><path fill-rule="evenodd" d="M2.500 1.500h9c.6 0 1 .4 1 1v4.700c0 2.800-2.400 4.700-5.500 6C3.900 11.900 1.500 10 1.500 7.200V2.500c0-.6.400-1 1-1zM7 3.200v8.200c1.900-.9 3.500-2.200 3.500-4.200V3.200z"/></svg>派单</span><span class="bx rd"><svg class="ic rcy" width="14" height="14" viewBox="0 0 16 16" preserveAspectRatio="none" fill="currentColor" style=""><circle cx="8" cy="8" r="4.700" fill="none" stroke="currentColor" stroke-width="3.300" stroke-dasharray="8.350 1.500" stroke-dashoffset="3"/></svg>爆单</span></td>
<td>001233</td>
<td>Lv 1</td>
<td>-</td>
<td>-</td>
<td>40</td>
<td>630.10</td>
<td>0.00</td>
<td>000122</td>
<td>TD8WZA</td>
<td><span class="sw "><i></i></span></td>
<td><span class="sw "><i></i></span></td>
<td><span class="lb">离线</span></td>
<td class="dt">2024-09-14 18:08:33</td>
</tr>
<tr class="">
<td><span class="cb "></span></td>
<td class="ops"><span class="bg "><span class="b1">操作</span><span class="b2"><svg class="ic " width="8" height="5" viewBox="0 0 8 5" preserveAspectRatio="none" fill="currentColor" style=""><path d="M0 0h8L4 4.500z"/></svg></span></span><span class="bx gr"><svg class="ic shd" width="12" height="12" viewBox="0 0 14 14" preserveAspectRatio="none" fill="currentColor" style=""><path fill-rule="evenodd" d="M2.500 1.500h9c.6 0 1 .4 1 1v4.700c0 2.800-2.400 4.700-5.500 6C3.900 11.900 1.500 10 1.500 7.200V2.500c0-.6.400-1 1-1zM7 3.200v8.200c1.900-.9 3.500-2.200 3.500-4.200V3.200z"/></svg>派单</span><span class="bx rd"><svg class="ic rcy" width="14" height="14" viewBox="0 0 16 16" preserveAspectRatio="none" fill="currentColor" style=""><circle cx="8" cy="8" r="4.700" fill="none" stroke="currentColor" stroke-width="3.300" stroke-dasharray="8.350 1.500" stroke-dashoffset="3"/></svg>爆单</span></td>
<td>000122</td>
<td>Lv 1</td>
<td>-</td>
<td>-</td>
<td>40</td>
<td>15.99</td>
<td>0.00</td>
<td>09988778899</td>
<td>G5UHYL</td>
<td><span class="sw "><i></i></span></td>
<td><span class="sw "><i></i></span></td>
<td><span class="lb">离线</span></td>
<td class="dt">2024-09-14 18:08:07</td>
</tr>
<tr class="odd">
<td><span class="cb "></span></td>
<td class="ops"><span class="bg "><span class="b1">操作</span><span class="b2"><svg class="ic " width="8" height="5" viewBox="0 0 8 5" preserveAspectRatio="none" fill="currentColor" style=""><path d="M0 0h8L4 4.500z"/></svg></span></span><span class="bx gr"><svg class="ic shd" width="12" height="12" viewBox="0 0 14 14" preserveAspectRatio="none" fill="currentColor" style=""><path fill-rule="evenodd" d="M2.500 1.500h9c.6 0 1 .4 1 1v4.700c0 2.800-2.400 4.700-5.500 6C3.900 11.900 1.500 10 1.500 7.200V2.500c0-.6.400-1 1-1zM7 3.200v8.200c1.900-.9 3.500-2.200 3.500-4.200V3.200z"/></svg>派单</span><span class="bx rd"><svg class="ic rcy" width="14" height="14" viewBox="0 0 16 16" preserveAspectRatio="none" fill="currentColor" style=""><circle cx="8" cy="8" r="4.700" fill="none" stroke="currentColor" stroke-width="3.300" stroke-dasharray="8.350 1.500" stroke-dashoffset="3"/></svg>爆单</span></td>
<td>09988778899</td>
<td>Lv 1</td>
<td>-</td>
<td>-</td>
<td>6</td>
<td>652.30</td>
<td>0.00</td>
<td>sky</td>
<td>Q7ZNAD</td>
<td><span class="sw "><i></i></span></td>
<td><span class="sw "><i></i></span></td>
<td><span class="lb">离线</span></td>
<td class="dt">2024-09-14 14:13:48</td>
</tr>
<tr class="">
<td><span class="cb "></span></td>
<td class="ops"><span class="bg "><span class="b1">操作</span><span class="b2"><svg class="ic " width="8" height="5" viewBox="0 0 8 5" preserveAspectRatio="none" fill="currentColor" style=""><path d="M0 0h8L4 4.500z"/></svg></span></span><span class="bx gr"><svg class="ic shd" width="12" height="12" viewBox="0 0 14 14" preserveAspectRatio="none" fill="currentColor" style=""><path fill-rule="evenodd" d="M2.500 1.500h9c.6 0 1 .4 1 1v4.700c0 2.800-2.400 4.700-5.500 6C3.900 11.900 1.500 10 1.500 7.200V2.500c0-.6.400-1 1-1zM7 3.200v8.200c1.900-.9 3.500-2.200 3.500-4.200V3.200z"/></svg>派单</span><span class="bx rd"><svg class="ic rcy" width="14" height="14" viewBox="0 0 16 16" preserveAspectRatio="none" fill="currentColor" style=""><circle cx="8" cy="8" r="4.700" fill="none" stroke="currentColor" stroke-width="3.300" stroke-dasharray="8.350 1.500" stroke-dashoffset="3"/></svg>爆单</span></td>
<td>123000</td>
<td>Lv 1</td>
<td>-</td>
<td>-</td>
<td>7</td>
<td>10520.42</td>
<td>0.00</td>
<td>69949514872</td>
<td>DASKXH</td>
<td><span class="sw on"><i></i></span></td>
<td><span class="sw "><i></i></span></td>
<td><span class="lb">离线</span></td>
<td class="dt">2024-08-09 20:49:09</td>
</tr>
<tr class="odd">
<td><span class="cb "></span></td>
<td class="ops"><span class="bg "><span class="b1">操作</span><span class="b2"><svg class="ic " width="8" height="5" viewBox="0 0 8 5" preserveAspectRatio="none" fill="currentColor" style=""><path d="M0 0h8L4 4.500z"/></svg></span></span><span class="bx gr"><svg class="ic shd" width="12" height="12" viewBox="0 0 14 14" preserveAspectRatio="none" fill="currentColor" style=""><path fill-rule="evenodd" d="M2.500 1.500h9c.6 0 1 .4 1 1v4.700c0 2.800-2.400 4.700-5.500 6C3.900 11.900 1.500 10 1.500 7.200V2.500c0-.6.400-1 1-1zM7 3.200v8.200c1.900-.9 3.500-2.200 3.500-4.200V3.200z"/></svg>派单</span><span class="bx rd"><svg class="ic rcy" width="14" height="14" viewBox="0 0 16 16" preserveAspectRatio="none" fill="currentColor" style=""><circle cx="8" cy="8" r="4.700" fill="none" stroke="currentColor" stroke-width="3.300" stroke-dasharray="8.350 1.500" stroke-dashoffset="3"/></svg>爆单</span></td>
<td>69949514872</td>
<td>Lv 1</td>
<td>-</td>
<td>-</td>
<td>0</td>
<td>42.07</td>
<td>0.00</td>
<td>niuge</td>
<td>MP8YT2</td>
<td><span class="sw "><i></i></span></td>
<td><span class="sw "><i></i></span></td>
<td><span class="lb">离线</span></td>
<td class="dt">2024-08-08 20:02:05</td>
</tr>
<tr class="">
<td><span class="cb "></span></td>
<td class="ops"><span class="bg "><span class="b1">操作</span><span class="b2"><svg class="ic " width="8" height="5" viewBox="0 0 8 5" preserveAspectRatio="none" fill="currentColor" style=""><path d="M0 0h8L4 4.500z"/></svg></span></span><span class="bx gr"><svg class="ic shd" width="12" height="12" viewBox="0 0 14 14" preserveAspectRatio="none" fill="currentColor" style=""><path fill-rule="evenodd" d="M2.500 1.500h9c.6 0 1 .4 1 1v4.700c0 2.800-2.400 4.700-5.500 6C3.900 11.900 1.500 10 1.500 7.200V2.500c0-.6.400-1 1-1zM7 3.200v8.200c1.900-.9 3.500-2.200 3.500-4.200V3.200z"/></svg>派单</span><span class="bx rd"><svg class="ic rcy" width="14" height="14" viewBox="0 0 16 16" preserveAspectRatio="none" fill="currentColor" style=""><circle cx="8" cy="8" r="4.700" fill="none" stroke="currentColor" stroke-width="3.300" stroke-dasharray="8.350 1.500" stroke-dashoffset="3"/></svg>爆单</span></td>
<td>69942854672</td>
<td>Lv 1</td>
<td>-</td>
<td>-</td>
<td>0</td>
<td>0.00</td>
<td>0.00</td>
<td>niuge</td>
<td>HLZ9DE</td>
<td><span class="sw "><i></i></span></td>
<td><span class="sw "><i></i></span></td>
<td><span class="lb">离线</span></td>
<td class="dt">2024-08-08 20:00:40</td>
</tr>
<tr class="odd">
<td><span class="cb "></span></td>
<td class="ops"><span class="bg "><span class="b1">操作</span><span class="b2"><svg class="ic " width="8" height="5" viewBox="0 0 8 5" preserveAspectRatio="none" fill="currentColor" style=""><path d="M0 0h8L4 4.500z"/></svg></span></span><span class="bx gr"><svg class="ic shd" width="12" height="12" viewBox="0 0 14 14" preserveAspectRatio="none" fill="currentColor" style=""><path fill-rule="evenodd" d="M2.500 1.500h9c.6 0 1 .4 1 1v4.700c0 2.800-2.400 4.700-5.500 6C3.900 11.900 1.500 10 1.500 7.200V2.500c0-.6.400-1 1-1zM7 3.200v8.200c1.900-.9 3.500-2.200 3.500-4.200V3.200z"/></svg>派单</span><span class="bx rd"><svg class="ic rcy" width="14" height="14" viewBox="0 0 16 16" preserveAspectRatio="none" fill="currentColor" style=""><circle cx="8" cy="8" r="4.700" fill="none" stroke="currentColor" stroke-width="3.300" stroke-dasharray="8.350 1.500" stroke-dashoffset="3"/></svg>爆单</span></td>
<td>69942856257</td>
<td>Lv 1</td>
<td>-</td>
<td>-</td>
<td>0</td>
<td>0.00</td>
<td>0.00</td>
<td>niuge</td>
<td>DF7RXL</td>
<td><span class="sw "><i></i></span></td>
<td><span class="sw "><i></i></span></td>
<td><span class="lb">离线</span></td>
<td class="dt">2024-08-08 19:59:30</td>
</tr>
<tr class="">
<td><span class="cb "></span></td>
<td class="ops"><span class="bg "><span class="b1">操作</span><span class="b2"><svg class="ic " width="8" height="5" viewBox="0 0 8 5" preserveAspectRatio="none" fill="currentColor" style=""><path d="M0 0h8L4 4.500z"/></svg></span></span><span class="bx gr"><svg class="ic shd" width="12" height="12" viewBox="0 0 14 14" preserveAspectRatio="none" fill="currentColor" style=""><path fill-rule="evenodd" d="M2.500 1.500h9c.6 0 1 .4 1 1v4.700c0 2.800-2.400 4.700-5.500 6C3.900 11.900 1.500 10 1.500 7.200V2.500c0-.6.400-1 1-1zM7 3.200v8.200c1.900-.9 3.500-2.200 3.500-4.200V3.200z"/></svg>派单</span><span class="bx rd"><svg class="ic rcy" width="14" height="14" viewBox="0 0 16 16" preserveAspectRatio="none" fill="currentColor" style=""><circle cx="8" cy="8" r="4.700" fill="none" stroke="currentColor" stroke-width="3.300" stroke-dasharray="8.350 1.500" stroke-dashoffset="3"/></svg>爆单</span></td>
<td>69986556257</td>
<td>Lv 1</td>
<td>-</td>
<td>-</td>
<td>0</td>
<td>0.00</td>
<td>0.00</td>
<td>niuge</td>
<td>CXGH2W</td>
<td><span class="sw "><i></i></span></td>
<td><span class="sw "><i></i></span></td>
<td><span class="lb">离线</span></td>
<td class="dt">2024-08-08 19:57:39</td>
</tr>
<tr class="odd">
<td><span class="cb "></span></td>
<td class="ops"><span class="bg "><span class="b1">操作</span><span class="b2"><svg class="ic " width="8" height="5" viewBox="0 0 8 5" preserveAspectRatio="none" fill="currentColor" style=""><path d="M0 0h8L4 4.500z"/></svg></span></span><span class="bx gr"><svg class="ic shd" width="12" height="12" viewBox="0 0 14 14" preserveAspectRatio="none" fill="currentColor" style=""><path fill-rule="evenodd" d="M2.500 1.500h9c.6 0 1 .4 1 1v4.700c0 2.800-2.400 4.700-5.500 6C3.900 11.900 1.500 10 1.500 7.200V2.500c0-.6.400-1 1-1zM7 3.200v8.200c1.900-.9 3.500-2.200 3.500-4.200V3.200z"/></svg>派单</span><span class="bx rd"><svg class="ic rcy" width="14" height="14" viewBox="0 0 16 16" preserveAspectRatio="none" fill="currentColor" style=""><circle cx="8" cy="8" r="4.700" fill="none" stroke="currentColor" stroke-width="3.300" stroke-dasharray="8.350 1.500" stroke-dashoffset="3"/></svg>爆单</span></td>
<td>1233333333</td>
<td>Lv 1</td>
<td>-</td>
<td>-</td>
<td>0</td>
<td>0.00</td>
<td>0.00</td>
<td>niuge</td>
<td>JLSHRQ</td>
<td><span class="sw "><i></i></span></td>
<td><span class="sw "><i></i></span></td>
<td><span class="lb">离线</span></td>
<td class="dt">2024-08-07 23:44:44</td>
</tr>
</tbody></table>
<div class="ddclip"><ul class="dd">
<li style="top:5.90px"><span class="di" style="left:-4.5px"><svg class="ic " width="12" height="13" viewBox="0 0 14 14" preserveAspectRatio="none" fill="currentColor" style=""><path d="M10.300 1.200l2.500 2.500-1.400 1.400L8.900 2.600zM8.100 3.400l2.500 2.500-6.200 6.200-3.200.7.700-3.200z"/></svg></span><span class="dtx" style="left:20.4px">编辑信息</span></li>
<li style="top:36.47px"><span class="di" style="left:-3.5px"><svg class="ic " width="8" height="13" viewBox="0 0 10 14" preserveAspectRatio="none" fill="currentColor" style=""><path d="M4.300.8h1.400v1.500c1.300.2 2.300.9 2.700 2l-1.500.6c-.3-.8-1-1.200-1.900-1.200-1 0-1.600.4-1.600 1.100 0 .7.500 1 2 1.400 2.100.5 3.300 1.200 3.300 2.900 0 1.500-1.100 2.500-3 2.700v1.400H4.300v-1.400c-1.600-.2-2.700-1.100-3.100-2.400l1.600-.6c.3 1 1.100 1.500 2.300 1.500 1.100 0 1.800-.4 1.800-1.200 0-.7-.5-1-2.100-1.400C2.800 7.200 1.600 6.500 1.600 4.900c0-1.400 1-2.400 2.700-2.600z"/></svg></span><span class="dtx" style="left:17.4px">赠送彩金</span></li>
<li style="top:67.04px"><span class="di" style="left:-4.5px"><svg class="ic " width="10" height="13" viewBox="0 0 14 14" preserveAspectRatio="none" fill="currentColor" style=""><path fill-rule="evenodd" d="M2.500 1.500h9c.6 0 1 .4 1 1v4.700c0 2.800-2.400 4.700-5.500 6C3.900 11.900 1.500 10 1.500 7.200V2.500c0-.6.400-1 1-1zM7 3.200v8.200c1.900-.9 3.500-2.200 3.500-4.200V3.200z"/></svg></span><span class="dtx" style="left:18.4px">扣除余额</span></li>
<li style="top:97.61px"><span class="di" style="left:-4.5px"><svg class="ic " width="12" height="13" viewBox="0 0 16 16" preserveAspectRatio="none" fill="currentColor" style=""><g fill="none" stroke="currentColor" stroke-width="2.300"><path d="M2.500 7.300A5.600 5.600 0 0 1 12.400 4.400"/><path d="M13.500 8.700A5.600 5.600 0 0 1 3.600 11.600"/></g><path d="M14.600 1.400v5.400H9.200z"/><path d="M1.400 14.600V9.200h5.400z"/></svg></span><span class="dtx" style="left:20.4px">重置订单</span></li>
<li style="top:128.18px"><span class="di" style="left:-4.5px"><svg class="ic " width="12" height="13" viewBox="0 0 14 14" preserveAspectRatio="none" fill="currentColor" style=""><path d="M10.300 1.200l2.500 2.500-1.400 1.400L8.900 2.600zM8.100 3.400l2.500 2.500-6.200 6.200-3.200.7.700-3.200z"/></svg></span><span class="dtx" style="left:20.4px">发送私信</span></li>
<li style="top:158.75px"><span class="di" style="left:-3.5px"><svg class="ic " width="9" height="13" viewBox="0 0 12 14" preserveAspectRatio="none" fill="currentColor" style=""><path fill-rule="evenodd" d="M6 1a3.500 3.500 0 0 1 3.500 3.500V6h.7c.4 0 .8.400.8.800v5.400c0 .4-.4.800-.8.800H1.800c-.4 0-.8-.4-.8-.8V6.800c0-.4.400-.8.800-.8h.7V4.500A3.500 3.500 0 0 1 6 1zm0 1.700c-1 0-1.800.8-1.800 1.800V6h3.600V4.500c0-1-.8-1.800-1.800-1.800z"/></svg></span><span class="dtx" style="left:18.4px">修改密码</span></li>
<li style="top:189.32px"><span class="di" style="left:-7.5px"><svg class="ic " width="12" height="13" viewBox="0 0 14 14" preserveAspectRatio="none" fill="currentColor" style=""><path d="M10.300 1.200l2.500 2.500-1.400 1.400L8.900 2.600zM8.100 3.400l2.500 2.500-6.200 6.200-3.200.7.700-3.200z"/></svg></span><span class="dtx" style="left:17.4px">更换上级</span></li>
<li style="top:219.89px"><span class="di" style="left:-7.5px"><svg class="ic " width="12" height="13" viewBox="0 0 14 14" preserveAspectRatio="none" fill="currentColor" style=""><path d="M10.300 1.200l2.500 2.500-1.400 1.400L8.900 2.600zM8.100 3.400l2.500 2.500-6.200 6.200-3.200.7.700-3.200z"/></svg></span><span class="dtx" style="left:17.4px">修改等级</span></li>
<li style="top:250.46px"><span class="di" style="left:-5.5px"><svg class="ic " width="15" height="13" viewBox="0 0 18 16" preserveAspectRatio="none" fill="currentColor" style=""><path fill-rule="evenodd" d="M1.800 2h14.400c.8 0 1.400.6 1.400 1.400v9.200c0 .8-.6 1.400-1.400 1.400H1.800c-.8 0-1.400-.6-1.400-1.400V3.400C.4 2.600 1 2 1.800 2zm0 1.200a.2.200 0 0 0-.2.200v1.500h14.800V3.400a.2.200 0 0 0-.2-.2zM1.600 7.500v5.100c0 .1.100.2.200.2h14.400c.1 0 .2-.1.200-.2V7.500zm1.600 3.100h2.300v1.200H3.200zm3.400 0h3.500v1.200H6.600z"/></svg></span><span class="dtx" style="left:22.4px">银行信息</span></li>
<li style="top:281.03px"><span class="di" style="left:-4.5px"><svg class="ic " width="11" height="13" viewBox="0 0 16 16" preserveAspectRatio="none" fill="currentColor" style=""><path fill-rule="evenodd" d="M6 1.200h4l.7 1.500h2.600c.2 0 .4.200.4.400v.8c0 .2-.2.400-.4.400h-.5v9c0 .8-.6 1.500-1.400 1.500H4.600c-.8 0-1.400-.7-1.400-1.500v-9h-.5c-.2 0-.4-.2-.4-.4v-.8c0-.2.200-.4.400-.4h2.600zm.5 1l-.3.500h3.600l-.3-.5zM5.400 6v6.200h1.200V6zm2 0v6.200h1.200V6zm2 0v6.200h1.200V6z"/></svg></span><span class="dtx" style="left:19.4px">删除银行</span></li>
<li style="top:311.60px"><span class="di" style="left:-4.5px"><svg class="ic " width="9" height="13" viewBox="0 0 12 14" preserveAspectRatio="none" fill="currentColor" style=""><path fill-rule="evenodd" d="M6 1a3.500 3.500 0 0 1 3.500 3.500V6h.7c.4 0 .8.400.8.800v5.400c0 .4-.4.800-.8.800H1.800c-.4 0-.8-.4-.8-.8V6.800c0-.4.400-.8.800-.8h.7V4.500A3.500 3.500 0 0 1 6 1zm0 1.700c-1 0-1.800.8-1.800 1.800V6h3.600V4.500c0-1-.8-1.800-1.800-1.800z"/></svg></span><span class="dtx" style="left:17.4px">USDT地址</span></li>
<li style="top:342.17px"><span class="di" style="left:-9.5px"><svg class="ic " width="11" height="13" viewBox="0 0 16 16" preserveAspectRatio="none" fill="currentColor" style=""><path fill-rule="evenodd" d="M6 1.200h4l.7 1.500h2.600c.2 0 .4.200.4.400v.8c0 .2-.2.400-.4.400h-.5v9c0 .8-.6 1.500-1.400 1.500H4.600c-.8 0-1.400-.7-1.400-1.500v-9h-.5c-.2 0-.4-.2-.4-.4v-.8c0-.2.200-.4.400-.4h2.600zm.5 1l-.3.500h3.600l-.3-.5zM5.400 6v6.200h1.200V6zm2 0v6.200h1.200V6zm2 0v6.200h1.200V6z"/></svg></span><span class="dtx" style="left:14.4px">删除USDT</span></li>
<li style="top:372.74px"><span class="di" style="left:-5.5px"><svg class="ic " width="12" height="13" viewBox="0 0 14 14" preserveAspectRatio="none" fill="currentColor" style=""><path d="M1 2.500h12v1.800H1zm0 3.600h12v1.800H1zm0 3.600h12v1.800H1z"/></svg></span><span class="dtx" style="left:19.4px">设置进度</span></li>
<li style="top:403.31px"><span class="di" style="left:-5.5px"><svg class="ic " width="14" height="13" viewBox="0 0 18 16" preserveAspectRatio="none" fill="currentColor" style=""><path d="M1.500 2v11h16v1.500H0V2zM16 3.500v4.200L14.700 6.400l-4 4-2.300-2.300L4.300 12.200 3.100 11l5.300-5.300 2.300 2.300 2.800-2.800L12.200 3.900H16z"/></svg></span><span class="dtx" style="left:21.4px">流水记录</span></li>
<li style="top:433.88px"><span class="di" style="left:-7.5px"><svg class="ic " width="12" height="13" viewBox="0 0 14 14" preserveAspectRatio="none" fill="currentColor" style=""><path d="M10.300 1.200l2.500 2.500-1.400 1.400L8.900 2.600zM8.100 3.400l2.500 2.500-6.200 6.200-3.200.7.700-3.200z"/></svg></span><span class="dtx" style="left:17.4px">冻结/解冻</span></li>
<li style="top:464.45px"><span class="di" style="left:-4.5px"><svg class="ic " width="12" height="13" viewBox="0 0 16 16" preserveAspectRatio="none" fill="currentColor" style=""><g fill="none" stroke="currentColor" stroke-width="2.300"><path d="M2.500 7.300A5.600 5.600 0 0 1 12.400 4.400"/><path d="M13.500 8.700A5.600 5.600 0 0 1 3.600 11.600"/></g><path d="M14.600 1.400v5.400H9.200z"/><path d="M1.400 14.600V9.200h5.400z"/></svg></span><span class="dtx" style="left:20.4px">清除时间</span></li>
</ul></div>
</div>
<div class="pfoot"><span class="pinfo">显示第 1 到第 15 条记录，总共 26 条记录 每页显示 <span class="psz">15<svg class="ic cu" width="8" height="4" viewBox="0 0 8 5" preserveAspectRatio="none" fill="currentColor" style=""><path d="M0 5h8L4 .5z"/></svg></span> 条记录</span>
<ul class="pg"><li class="p1">上一页</li><li class="p2 on">1</li><li class="p3">2</li><li class="p4">下一页</li></ul><span class="jin"></span><span class="jbtn">跳转</span>
</div>
<div class="wm"><span class="l">TG:anonsl23x,</span><span class="c">系统开发</span></div>
</div></div>
<div class="scroll"><i class="au"></i><i class="thumb"></i><i class="ad"></i></div>
<div class="trans"><span class="zh">中</span><span class="en">A</span><svg width="18" height="18" viewBox="0 0 18 18" fill="none" stroke="#fff" stroke-width="1.600" stroke-linecap="round"><path d="M11.500 3h2.300a1.800 1.800 0 0 1 1.800 1.800v1"/><path d="M2.200 12.300v.8a1.800 1.800 0 0 0 1.800 1.800h2"/></svg></div>
</body></html>
